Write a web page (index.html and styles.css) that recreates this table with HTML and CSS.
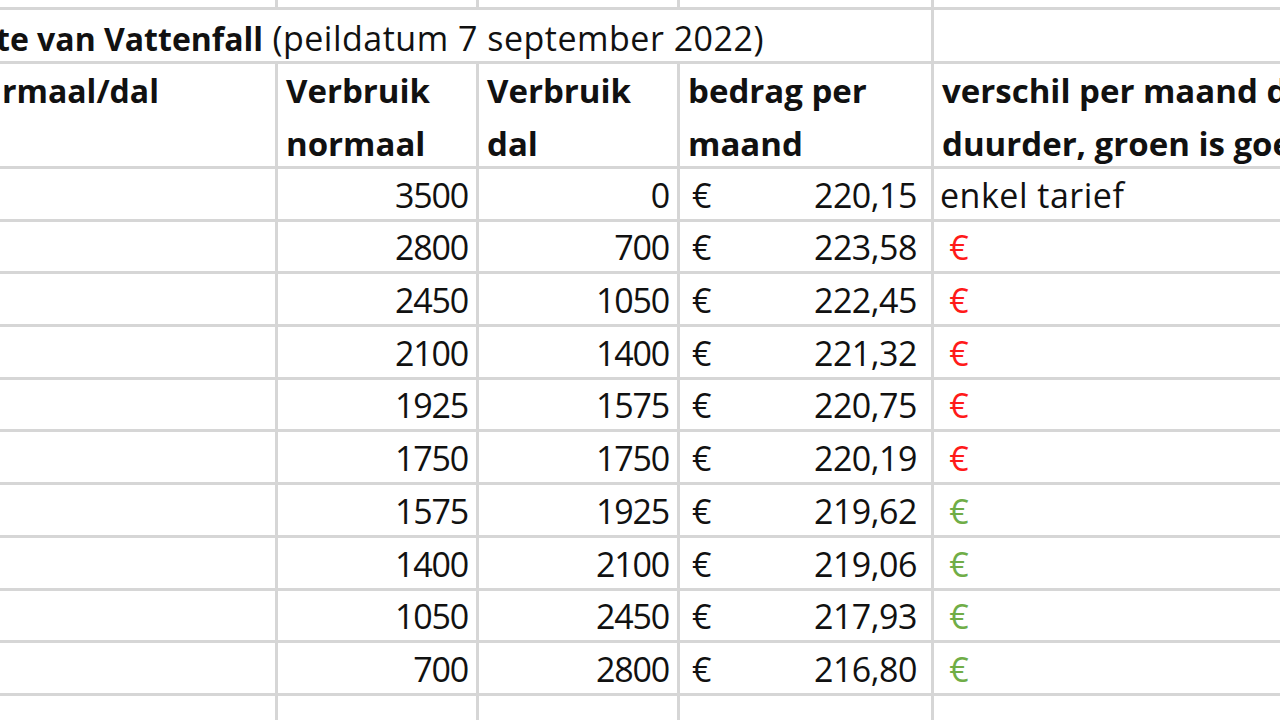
FILE: index.html
```html
<!DOCTYPE html>
<html lang="nl">
<head>
<meta charset="utf-8">
<title>Vattenfall</title>
<link rel="stylesheet" href="styles.css">
</head>
<body>
<div class="sheet">
  <div class="c"></div><div class="c"></div><div class="c"></div><div class="c"></div><div class="c"></div>

  <div class="c title"><span class="clip"><b>te van Vattenfall</b> <span class="norm">(peildatum 7 september 2022)</span></span></div>
  <div class="c"></div>

  <div class="c head"><b class="cut">rmaal/dal<br>&nbsp;</b></div>
  <div class="c head"><b>Verbruik<br>normaal</b></div>
  <div class="c head"><b>Verbruik<br>dal</b></div>
  <div class="c head"><b>bedrag per<br>maand</b></div>
  <div class="c head wide"><b>verschil per maand duurder<br>duurder, groen is goedkoper</b></div>

  <div class="c"></div><div class="c num">3500</div><div class="c num">0</div><div class="c eur"><span>€</span><span class="amt">220,15</span></div><div class="c txt">enkel tarief</div>
  <div class="c"></div><div class="c num">2800</div><div class="c num">700</div><div class="c eur"><span>€</span><span class="amt">223,58</span></div><div class="c txt red">&nbsp;€</div>
  <div class="c"></div><div class="c num">2450</div><div class="c num">1050</div><div class="c eur"><span>€</span><span class="amt">222,45</span></div><div class="c txt red">&nbsp;€</div>
  <div class="c"></div><div class="c num">2100</div><div class="c num">1400</div><div class="c eur"><span>€</span><span class="amt">221,32</span></div><div class="c txt red">&nbsp;€</div>
  <div class="c"></div><div class="c num">1925</div><div class="c num">1575</div><div class="c eur"><span>€</span><span class="amt">220,75</span></div><div class="c txt red">&nbsp;€</div>
  <div class="c"></div><div class="c num">1750</div><div class="c num">1750</div><div class="c eur"><span>€</span><span class="amt">220,19</span></div><div class="c txt red">&nbsp;€</div>
  <div class="c"></div><div class="c num">1575</div><div class="c num">1925</div><div class="c eur"><span>€</span><span class="amt">219,62</span></div><div class="c txt green">&nbsp;€</div>
  <div class="c"></div><div class="c num">1400</div><div class="c num">2100</div><div class="c eur"><span>€</span><span class="amt">219,06</span></div><div class="c txt green">&nbsp;€</div>
  <div class="c"></div><div class="c num">1050</div><div class="c num">2450</div><div class="c eur"><span>€</span><span class="amt">217,93</span></div><div class="c txt green">&nbsp;€</div>
  <div class="c"></div><div class="c num">700</div><div class="c num">2800</div><div class="c eur"><span>€</span><span class="amt">216,80</span></div><div class="c txt green">&nbsp;€</div>

  <div class="c"></div><div class="c"></div><div class="c"></div><div class="c"></div><div class="c"></div>
</div>
</body>
</html>
```

FILE: styles.css
```css
html, body {
  margin: 0;
  padding: 0;
  background: #ffffff;
  overflow: hidden;
}

.sheet {
  width: 1280px;
  height: 720px;
  display: grid;
  grid-template-columns: 275px 198px 198px 251px 1fr;
  grid-template-rows: 7px 51px 102px repeat(10, 49.7px) 40px;
  gap: 3px;
  background: #d6d6d6;
  font-family: "Open Sans", "Liberation Sans", sans-serif;
  font-size: 34px;
  letter-spacing: 0.5px;
  color: #111111;
  overflow: hidden;
}

.c {
  background: #ffffff;
  display: flex;
  align-items: flex-end;
  line-height: 1;
  padding: 0 8px 7px 8px;
  white-space: nowrap;
  overflow: hidden;
  min-width: 0;
}

.title {
  grid-column: span 4;
  padding-left: 0;
  padding-bottom: 6px;
  overflow: visible;
}

.clip {
  margin-left: -4px;
}

.title b,
.head b {
  font-weight: 700;
  font-size: 33px;
  letter-spacing: 0;
}

.title b {
  font-size: 32px;
}

.head {
  line-height: 53px;
  padding-bottom: 0;
}

.head b {
  display: block;
  margin-bottom: -4px;
}

.head b.cut {
  margin-left: -6px;
  font-size: 32px;
}

.num {
  justify-content: flex-end;
  letter-spacing: -1.2px;
}

.eur {
  justify-content: space-between;
  padding-left: 12px;
  padding-right: 14px;
}

.amt {
  letter-spacing: -0.5px;
}

.txt {
  padding-left: 6px;
}

.red {
  color: #ff1a1a;
}

.green {
  color: #70ad47;
}
```
